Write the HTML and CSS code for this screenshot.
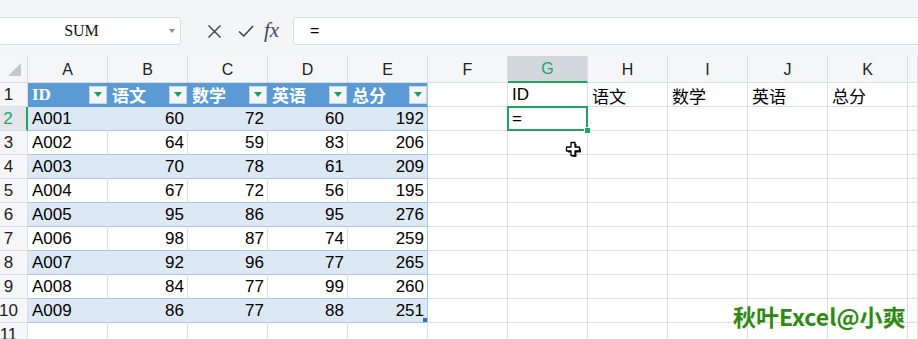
FILE: index.html
```html
<!DOCTYPE html>
<html lang="zh-CN">
<head>
    <meta charset="UTF-8">
    <title>秋叶Excel - 成绩表</title>
    <link rel="stylesheet" href="styles.css">
</head>
<body>
    <div class="topbar">
        <div class="namebox">
            <span class="name">SUM</span>
            <span class="caret"></span>
        </div>
        <div class="tools">
            <svg class="tool-x" width="15" height="15" viewBox="0 0 15 15"><path d="M1.5 1.5 L13.5 13.5 M13.5 1.5 L1.5 13.5" stroke="#3c3f44" stroke-width="1.4" fill="none"/></svg>
            <svg class="tool-ok" width="16" height="14" viewBox="0 0 16 14"><path d="M1 7.5 L5.8 12 L15 2" stroke="#3c3f44" stroke-width="1.5" fill="none"/></svg>
            <span class="fx">fx</span>
        </div>
        <div class="formula">=</div>
    </div>

    <div class="sheet">
        <!-- column headers -->
        <div class="cell corner"><span class="tri"></span></div>
        <div class="cell col-head">A</div>
        <div class="cell col-head">B</div>
        <div class="cell col-head">C</div>
        <div class="cell col-head">D</div>
        <div class="cell col-head">E</div>
        <div class="cell col-head">F</div>
        <div class="cell col-head col-on">G</div>
        <div class="cell col-head">H</div>
        <div class="cell col-head">I</div>
        <div class="cell col-head">J</div>
        <div class="cell col-head">K</div>
        <div class="cell col-head"></div>

        <!-- row 1 -->
        <div class="cell row-head">1</div>
        <div class="cell tbl-head"><span class="id">ID</span><span class="filter"></span></div>
        <div class="cell tbl-head"><span>语文</span><span class="filter"></span></div>
        <div class="cell tbl-head"><span>数学</span><span class="filter"></span></div>
        <div class="cell tbl-head"><span>英语</span><span class="filter"></span></div>
        <div class="cell tbl-head last"><span>总分</span><span class="filter"></span></div>
        <div class="cell"></div>
        <div class="cell">ID</div>
        <div class="cell">语文</div>
        <div class="cell">数学</div>
        <div class="cell">英语</div>
        <div class="cell">总分</div>
        <div class="cell"></div>

        <!-- row 2 -->
        <div class="cell row-head row-on">2</div>
        <div class="cell band">A001</div>
        <div class="cell band num">60</div>
        <div class="cell band num">72</div>
        <div class="cell band num">60</div>
        <div class="cell band num last">192</div>
        <div class="cell"></div>
        <div class="cell active">=</div>
        <div class="cell"></div>
        <div class="cell"></div>
        <div class="cell"></div>
        <div class="cell"></div>
        <div class="cell"></div>

        <!-- row 3 -->
        <div class="cell row-head">3</div>
        <div class="cell tbl">A002</div>
        <div class="cell tbl num">64</div>
        <div class="cell tbl num">59</div>
        <div class="cell tbl num">83</div>
        <div class="cell tbl num last">206</div>
        <div class="cell"></div>
        <div class="cell"></div>
        <div class="cell"></div>
        <div class="cell"></div>
        <div class="cell"></div>
        <div class="cell"></div>
        <div class="cell"></div>

        <!-- row 4 -->
        <div class="cell row-head">4</div>
        <div class="cell band">A003</div>
        <div class="cell band num">70</div>
        <div class="cell band num">78</div>
        <div class="cell band num">61</div>
        <div class="cell band num last">209</div>
        <div class="cell"></div>
        <div class="cell"></div>
        <div class="cell"></div>
        <div class="cell"></div>
        <div class="cell"></div>
        <div class="cell"></div>
        <div class="cell"></div>

        <!-- row 5 -->
        <div class="cell row-head">5</div>
        <div class="cell tbl">A004</div>
        <div class="cell tbl num">67</div>
        <div class="cell tbl num">72</div>
        <div class="cell tbl num">56</div>
        <div class="cell tbl num last">195</div>
        <div class="cell"></div>
        <div class="cell"></div>
        <div class="cell"></div>
        <div class="cell"></div>
        <div class="cell"></div>
        <div class="cell"></div>
        <div class="cell"></div>

        <!-- row 6 -->
        <div class="cell row-head">6</div>
        <div class="cell band">A005</div>
        <div class="cell band num">95</div>
        <div class="cell band num">86</div>
        <div class="cell band num">95</div>
        <div class="cell band num last">276</div>
        <div class="cell"></div>
        <div class="cell"></div>
        <div class="cell"></div>
        <div class="cell"></div>
        <div class="cell"></div>
        <div class="cell"></div>
        <div class="cell"></div>

        <!-- row 7 -->
        <div class="cell row-head">7</div>
        <div class="cell tbl">A006</div>
        <div class="cell tbl num">98</div>
        <div class="cell tbl num">87</div>
        <div class="cell tbl num">74</div>
        <div class="cell tbl num last">259</div>
        <div class="cell"></div>
        <div class="cell"></div>
        <div class="cell"></div>
        <div class="cell"></div>
        <div class="cell"></div>
        <div class="cell"></div>
        <div class="cell"></div>

        <!-- row 8 -->
        <div class="cell row-head">8</div>
        <div class="cell band">A007</div>
        <div class="cell band num">92</div>
        <div class="cell band num">96</div>
        <div class="cell band num">77</div>
        <div class="cell band num last">265</div>
        <div class="cell"></div>
        <div class="cell"></div>
        <div class="cell"></div>
        <div class="cell"></div>
        <div class="cell"></div>
        <div class="cell"></div>
        <div class="cell"></div>

        <!-- row 9 -->
        <div class="cell row-head">9</div>
        <div class="cell tbl">A008</div>
        <div class="cell tbl num">84</div>
        <div class="cell tbl num">77</div>
        <div class="cell tbl num">99</div>
        <div class="cell tbl num last">260</div>
        <div class="cell"></div>
        <div class="cell"></div>
        <div class="cell"></div>
        <div class="cell"></div>
        <div class="cell"></div>
        <div class="cell"></div>
        <div class="cell"></div>

        <!-- row 10 -->
        <div class="cell row-head">10</div>
        <div class="cell band">A009</div>
        <div class="cell band num">86</div>
        <div class="cell band num">77</div>
        <div class="cell band num">88</div>
        <div class="cell band num last resize">251</div>
        <div class="cell"></div>
        <div class="cell"></div>
        <div class="cell"></div>
        <div class="cell"></div>
        <div class="cell"></div>
        <div class="cell"></div>
        <div class="cell"></div>

        <!-- row 11 -->
        <div class="cell row-head">11</div>
        <div class="cell"></div>
        <div class="cell"></div>
        <div class="cell"></div>
        <div class="cell"></div>
        <div class="cell"></div>
        <div class="cell"></div>
        <div class="cell"></div>
        <div class="cell"></div>
        <div class="cell"></div>
        <div class="cell"></div>
        <div class="cell"></div>
        <div class="cell"></div>
    </div>

    <!-- mouse pointer over the sheet -->
    <svg class="pointer" width="18" height="18" viewBox="0 0 18 18">
        <path d="M6 1.5 H10 V6 H14.5 V10 H10 V14.5 H6 V10 H1.5 V6 H6 Z" fill="#222" transform="translate(1.5 1.5)"/>
        <path d="M6 1.5 H10 V6 H14.5 V10 H10 V14.5 H6 V10 H1.5 V6 H6 Z" fill="#fff" stroke="#000" stroke-width="1.3" stroke-linejoin="round"/>
    </svg>

    <div class="mark">秋叶Excel@小爽</div>
</body>
</html>
```

FILE: styles.css
```css
/* sheet colours */
:root {
    --grid: #dadde2;
    --head-bg: #f5f6f7;
    --green: #21a366;
    --tbl-blue: #5b9bd5;
    --band: #dde8f5;
    --tbl-line: #a9c6e8;
}

body {
    margin: 0;
    width: 918px;
    height: 339px;
    overflow: hidden;
    background-color: white;
    font-family: 'Liberation Sans', 'Noto Sans CJK SC', sans-serif;
    color: #000;
    position: relative;
}

/* name box + formula bar */
.topbar {
    height: 56px;
    box-sizing: border-box;
    padding-top: 17px;
    background-color: #f4f5f7;
    display: flex;
    align-items: flex-start;
}

.namebox {
    width: 183px;
    height: 28px;
    margin-left: -2px;
    box-sizing: border-box;
    border: 1px solid #d9dce1;
    border-radius: 3px;
    background-color: white;
    display: flex;
    align-items: center;
}

.name {
    flex: 1;
    text-align: center;
    font-family: 'Liberation Serif', serif;
    font-size: 16px;
    color: #111;
}

.caret {
    width: 16px;
    display: flex;
    justify-content: center;
}

.caret::after {
    content: '';
    border-left: 3px solid transparent;
    border-right: 3px solid transparent;
    border-top: 4px solid #7d90ab;
}

.tools {
    width: 112px;
    height: 28px;
    box-sizing: border-box;
    padding-left: 26px;
    display: flex;
    align-items: center;
}

.tool-x {
    margin-right: 16px;
}

.tool-ok {
    margin-right: 10px;
}

.fx {
    font-family: 'Liberation Serif', serif;
    font-style: italic;
    font-size: 21px;
    color: #3b4d66;
    line-height: 1;
    margin-top: -2px;
}

.formula {
    flex: 1;
    height: 28px;
    margin-right: -4px;
    box-sizing: border-box;
    border: 1px solid #d9dce1;
    border-radius: 3px;
    background-color: white;
    padding-left: 16px;
    font-size: 16px;
    line-height: 26px;
}

/* grid */
.sheet {
    display: grid;
    grid-template-columns: 28px repeat(11, 80px) 10px;
    grid-template-rows: 27px repeat(11, 24px);
}

.cell {
    box-sizing: border-box;
    border-right: 1px solid var(--grid);
    border-bottom: 1px solid var(--grid);
    background-color: white;
    display: flex;
    align-items: center;
    padding: 1px 4px 0;
    font-size: 17px;
    white-space: nowrap;
    position: relative;
}

.corner {
    background-color: var(--head-bg);
    justify-content: flex-end;
    align-items: flex-end;
    padding: 0 6px 6px 0;
}

.tri {
    width: 0;
    height: 0;
    border-left: 13px solid transparent;
    border-bottom: 13px solid #c4c7cc;
}

.col-head {
    background-color: var(--head-bg);
    justify-content: center;
    font-size: 16px;
    color: #222;
}

.col-on {
    background-color: #d3d6db;
    color: var(--green);
    border-bottom: 2px solid var(--green);
}

.row-head {
    background-color: var(--head-bg);
    justify-content: center;
    padding: 1px 10px 0 0;
    color: #222;
}

.row-on {
    background-color: #e3e5e9;
    color: var(--green);
    border-right: 2px solid var(--green);
}

.num {
    justify-content: flex-end;
    padding-right: 3px;
}

/* table A1:E10 */
.tbl-head {
    background-color: var(--tbl-blue);
    border-right-color: var(--tbl-blue);
    border-bottom-color: var(--tbl-blue);
    color: white;
    font-weight: bold;
    font-size: 17px;
    justify-content: space-between;
    padding: 0 0 0 4px;
}

.tbl-head .id {
    font-family: 'Liberation Serif', serif;
}

.filter {
    width: 18px;
    height: 18px;
    box-sizing: border-box;
    background-color: #f4f5f6;
    border: 1px solid #cbd3dc;
    display: flex;
    justify-content: center;
    align-items: center;
}

.filter::after {
    content: '';
    border-left: 4px solid transparent;
    border-right: 4px solid transparent;
    border-top: 5px solid #1c9f5c;
}

.band {
    background-color: var(--band);
    border-right-color: var(--band);
    border-bottom-color: var(--tbl-line);
}

.tbl {
    border-bottom-color: var(--tbl-line);
}

.last {
    border-right-color: var(--tbl-line);
}

.resize::after {
    content: '';
    position: absolute;
    right: 0;
    bottom: 0;
    width: 4px;
    height: 4px;
    background-color: #2f6fc4;
}

/* selected cell G2 */
.active::after {
    content: '';
    position: absolute;
    left: -1px;
    top: -1px;
    right: -1px;
    bottom: -1px;
    border: 2px solid var(--green);
}

.active::before {
    content: '';
    position: absolute;
    right: -4px;
    bottom: -4px;
    width: 5px;
    height: 5px;
    background-color: var(--green);
    border: 1px solid white;
    z-index: 1;
}

.pointer {
    position: absolute;
    left: 565px;
    top: 141px;
}

.mark {
    position: absolute;
    left: 733px;
    top: 303px;
    font-family: 'Noto Sans CJK SC', sans-serif;
    font-weight: bold;
    font-size: 23px;
    line-height: 26px;
    color: #2f8a12;
}
```
